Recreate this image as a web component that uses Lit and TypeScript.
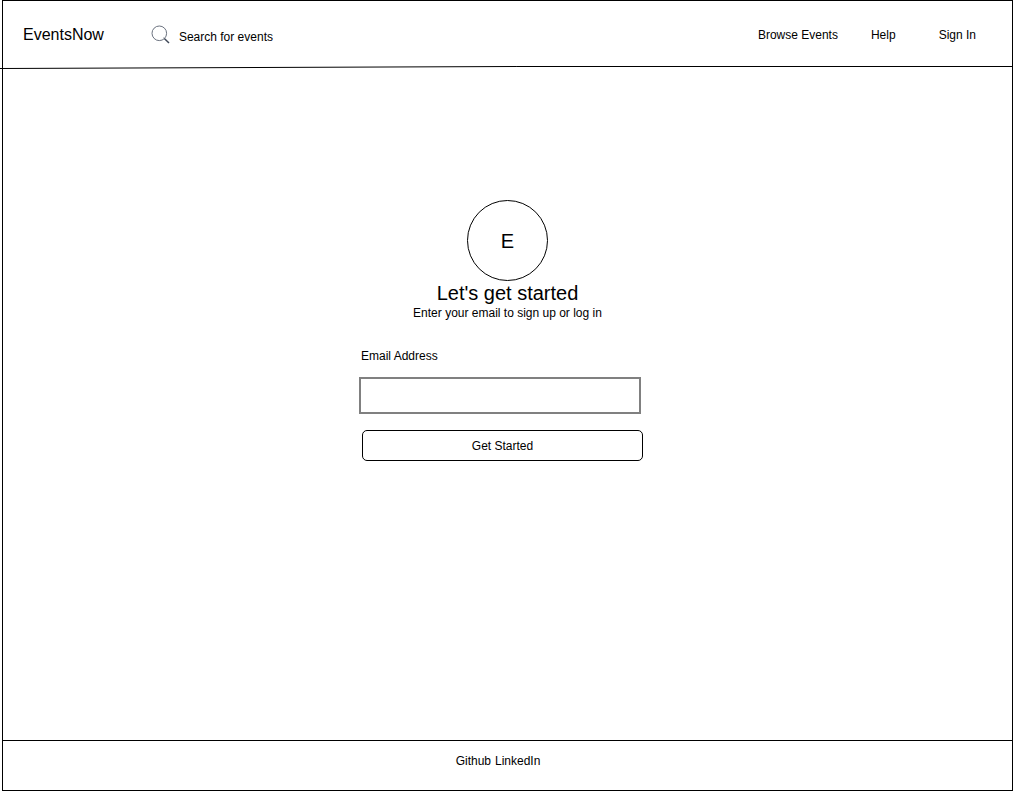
import { LitElement, html, css } from "lit";
import { customElement } from "lit/decorators.js";

@customElement("site-header")
class SiteHeader extends LitElement {
  static styles = css`
    :host {
      display: block;
    }
    .bar {
      display: flex;
      align-items: center;
      height: 66px;
      padding: 2px 36px 0 20px;
      box-sizing: border-box;
    }
    .brand {
      font-size: 16px;
      line-height: 20px;
      color: #000;
      text-decoration: none;
    }
    .search {
      display: flex;
      align-items: center;
      gap: 9px;
      margin-left: 47px;
      flex: 1;
    }
    .glass {
      display: block;
      flex: none;
      margin-bottom: 2px;
    }
    .field {
      font: inherit;
      color: #000;
      border: 0;
      padding: 4px 0 0;
      margin: 0;
      width: 160px;
      background: none;
      outline-offset: 4px;
    }
    .field::placeholder {
      color: #000;
      opacity: 1;
    }
    .links {
      display: flex;
    }
    .link {
      color: #000;
      text-decoration: none;
      margin-left: 33px;
    }
    .link:last-child {
      margin-left: 43px;
    }
    .rule {
      display: block;
      width: calc(100% + 3px);
      height: 3px;
      margin-left: -3px;
      margin-top: -1px;
    }
  `;

  render() {
    return html`
      <header>
        <div class="bar">
          <a class="brand" href="#">EventsNow</a>
          <label class="search">
            <svg class="glass" width="19" height="19" viewBox="0 0 19 19" fill="none" aria-hidden="true">
              <circle cx="8.3" cy="8.3" r="7.3" stroke="#5a6270" stroke-width="0.9" />
              <path d="M12.6 12.8 L14 14.2" stroke="#5a6270" stroke-width="0.9" />
              <path d="M13.6 13.8 L18 18" stroke="#3f4858" stroke-width="1.5" />
            </svg>
            <input class="field" type="search" placeholder="Search for events" aria-label="Search for events" />
          </label>
          <nav class="links">
            <a class="link" href="#browse">Browse Events</a>
            <a class="link" href="#help">Help</a>
            <a class="link" href="#signin">Sign In</a>
          </nav>
        </div>
        <svg class="rule" aria-hidden="true">
          <line x1="0" y1="2.5" x2="51%" y2="0.5" stroke="#000" />
          <line x1="51%" y1="0.5" x2="100%" y2="0.5" stroke="#000" />
        </svg>
      </header>
    `;
  }
}

@customElement("email-form")
class EmailForm extends LitElement {
  static styles = css`
    :host {
      display: block;
    }
    .form {
      display: flex;
      flex-direction: column;
      width: 284px;
    }
    .label {
      margin: 0 0 14px 2px;
    }
    .email {
      box-sizing: border-box;
      height: 37px;
      margin: 0 2px 16px 0;
      padding: 0 10px;
      border: 2px solid #808080;
      border-radius: 0;
      background: #fff;
      font: inherit;
    }
    .submit {
      box-sizing: border-box;
      height: 31px;
      margin: 0 0 0 3px;
      padding: 0;
      border: 1px solid #000;
      border-radius: 5px;
      background: #fff;
      color: #000;
      font: inherit;
      cursor: pointer;
    }
  `;

  render() {
    return html`
      <form class="form" @submit=${(e: Event) => e.preventDefault()}>
        <label class="label" for="email">Email Address</label>
        <input class="email" id="email" type="email" />
        <button class="submit" type="submit">Get Started</button>
      </form>
    `;
  }
}

@customElement("app-root")
class AppRoot extends LitElement {
  static styles = css`
    :host {
      display: flex;
      box-sizing: border-box;
      min-height: 100vh;
      padding: 0 1px 0 2px;
      background: #fff;
      color: #000;
      font: 12px/14px "Liberation Sans", Arial, Helvetica, sans-serif;
    }
    .frame {
      flex: 1;
      display: flex;
      flex-direction: column;
      border: 1px solid #000;
    }
    .main {
      flex: 1;
      display: flex;
      flex-direction: column;
      align-items: center;
      padding: 131px 0 40px;
    }
    .logo {
      box-sizing: border-box;
      display: grid;
      place-items: center;
      width: 81px;
      height: 81px;
      border: 1px solid #000;
      border-radius: 50%;
      font-size: 20px;
      line-height: 24px;
    }
    .title {
      margin: 0 0 1px;
      font-size: 20px;
      line-height: 24px;
      font-weight: 400;
    }
    .lead {
      margin: 0 0 29px;
    }
    .signup {
      margin-right: 13px;
    }
    .footer {
      display: flex;
      justify-content: center;
      gap: 4px;
      padding: 13px 19px 22px 0;
      border-top: 1px solid #000;
    }
    .link {
      color: #000;
      text-decoration: none;
    }
  `;

  render() {
    return html`
      <div class="frame">
        <site-header></site-header>
        <main class="main">
          <div class="logo">E</div>
          <h1 class="title">Let's get started</h1>
          <p class="lead">Enter your email to sign up or log in</p>
          <email-form class="signup"></email-form>
        </main>
        <footer class="footer">
          <a class="link" href="#github">Github</a>
          <a class="link" href="#linkedin">LinkedIn</a>
        </footer>
      </div>
    `;
  }
}
